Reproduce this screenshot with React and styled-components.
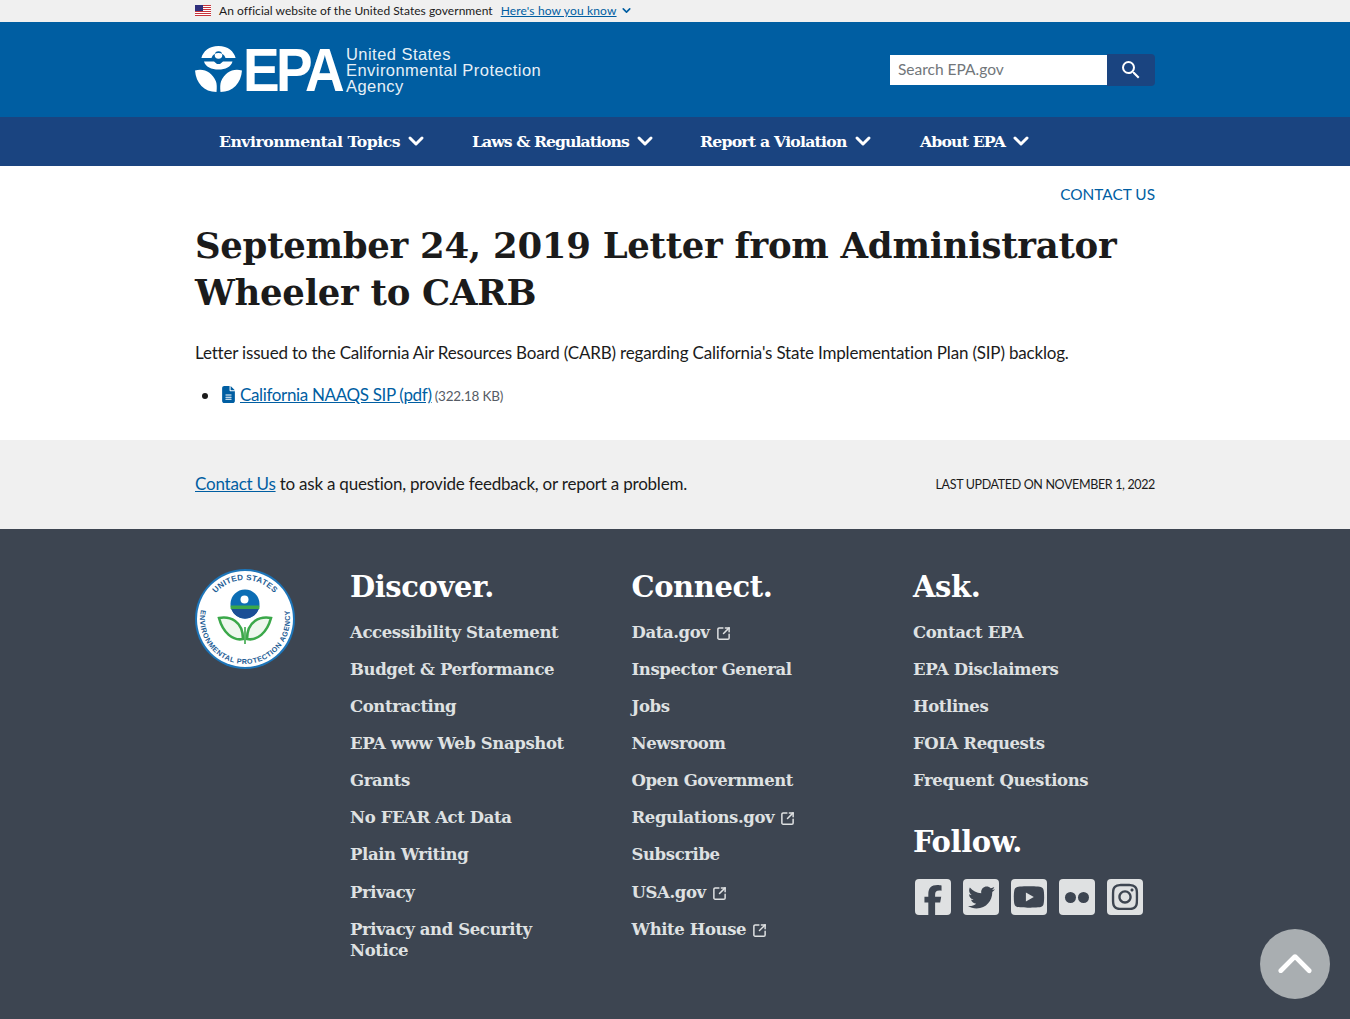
import React from "react";
import styled, { createGlobalStyle } from "styled-components";
import { MdSearch } from "react-icons/md";
import { FaFileLines, FaFacebookF, FaTwitter, FaYoutube, FaInstagram, FaChevronUp } from "react-icons/fa6";
import { SquareArrowOutUpRight, ChevronDown } from "lucide-react";

const SANS = `"Lato", "Open Sans", sans-serif`;
const SERIF = `"DejaVu Serif", "Liberation Serif", serif`;

const GlobalStyle = createGlobalStyle`
  html, body { margin: 0; padding: 0; }
  body { font-family: ${SANS}; color: #1b1b1b; background: #3d4551; }
  #root { min-height: 100vh; display: flex; flex-direction: column; }
  a { color: inherit; }
`;

const Wrap = styled.div`
  width: 960px;
  margin: 0 auto;
`;

const GovBanner = styled.div`
  height: 22px;
  background: #f0f0f0;
  font-size: 12px;
`;

const GovRow = styled(Wrap)`
  display: flex;
  align-items: center;
  height: 21px;
`;

const GovText = styled.span`
  margin-left: 8px;
  letter-spacing: 0.04px;
`;

const GovLink = styled.a`
  margin-left: 8px;
  color: #005ea2;
  text-decoration: underline;
  letter-spacing: 0.15px;
`;

const GovChevron = styled(ChevronDown)`
  margin-left: 3px;
  color: #005ea2;
`;

const Header = styled.header`
  height: 95px;
  background: #005ea2;
`;

const HeaderRow = styled(Wrap)`
  height: 95px;
  display: flex;
  align-items: center;
  justify-content: space-between;
`;

const Logo = styled.a`
  display: flex;
  align-items: center;
  color: #fff;
  text-decoration: none;
`;

const LogoMark = styled.span`
  flex: none;
  font-family: "Liberation Sans", sans-serif;
  font-weight: 700;
  font-size: 61px;
  line-height: 46px;
  letter-spacing: -4px;
  margin-left: 1px;
  transform: scaleX(0.9);
  transform-origin: left center;
  width: 103px;
`;

const LogoName = styled.span`
  font-family: "Liberation Sans", sans-serif;
  font-size: 16.5px;
  line-height: 16px;
  letter-spacing: 0.45px;
  color: #e6f0f7;
`;

const SearchForm = styled.form`
  display: flex;
  width: 265px;
  height: 32px;
`;

const SearchInput = styled.input`
  width: 217px;
  height: 30px;
  margin-top: 1px;
  box-sizing: border-box;
  border: 0;
  padding: 0 8px 2px;
  font: 400 15.5px ${SANS};
  background: #fff;
  border-radius: 0;
  &::placeholder { color: #71767a; opacity: 1; }
`;

const SearchButton = styled.button`
  flex: 1;
  border: 0;
  padding: 0;
  background: #1a4480;
  color: #fff;
  border-radius: 0 4px 4px 0;
  display: flex;
  align-items: center;
  justify-content: center;
`;

const Nav = styled.nav`
  height: 49px;
  background: #1a4480;
`;

const NavRow = styled(Wrap)`
  display: flex;
  height: 48px;
  align-items: center;
  padding-left: 24px;
  box-sizing: border-box;
`;

const NavItem = styled.a`
  display: flex;
  align-items: center;
  width: ${(p) => p.$w}px;
  color: #fff;
  font: 700 15.7px ${SERIF};
  letter-spacing: ${(p) => p.$track}px;
  svg { margin-left: 4px; }
`;

const Main = styled(Wrap)`
  background: #fff;
`;

const MainBand = styled.main`
  background: #fff;
  height: 274px;
`;

const TopContact = styled.div`
  padding-top: 17px;
  text-align: right;
  font-size: 15.4px;
  line-height: 22px;
  color: #005ea2;
`;

const Title = styled.h1`
  margin: 17px 0 0;
  font: 700 35.5px/47px ${SERIF};
  letter-spacing: -0.3px;
  color: #1b1b1b;
`;

const Lead = styled.p`
  margin: 25px 0 0;
  font-size: 17px;
  line-height: 24px;
  letter-spacing: -0.18px;
`;

const FileList = styled.ul`
  margin: 18px 0 0;
  padding-left: 25px;
  font-size: 17px;
  line-height: 24px;
`;

const FileLink = styled.a`
  color: #005ea2;
  text-decoration: underline;
  letter-spacing: -0.35px;
  svg { margin-right: 3px; vertical-align: -2px; }
`;

const FileSize = styled.span`
  margin-left: 3px;
  font-size: 13.5px;
  color: #565c65;
  letter-spacing: -0.2px;
`;

const Feedback = styled.div`
  background: #f0f0f0;
  height: 89px;
`;

const FeedbackRow = styled(Wrap)`
  height: 87px;
  display: flex;
  align-items: center;
  justify-content: space-between;
  font-size: 17px;
  letter-spacing: -0.22px;
`;

const FeedbackLink = styled.a`
  color: #005ea2;
  text-decoration: underline;
`;

const Updated = styled.span`
  padding-top: 1px;
  font-size: 12.5px;
  text-transform: uppercase;
  letter-spacing: -0.35px;
`;

const Footer = styled.footer`
  flex: 1;
  background: #3d4551;
  color: #fff;
`;

const FooterGrid = styled(Wrap)`
  display: grid;
  grid-template-columns: 115px repeat(3, 241.5px);
  column-gap: 40px;
  padding-top: 40px;
`;

const FooterTitle = styled.h2`
  margin: 0;
  font: 700 29px/36px ${SERIF};
  letter-spacing: -0.4px;
  color: #fff;
`;

const FooterLinks = styled.div`
  display: flex;
  flex-direction: column;
  gap: 16.09px;
  margin-top: 17px;
`;

const FooterLink = styled.a`
  display: block;
  font: 700 16.5px/21px ${SERIF};
  letter-spacing: -0.4px;
  color: #dfe1e2;
  svg { margin-left: 6px; vertical-align: -3px; }
`;

const FollowTitle = styled(FooterTitle)`
  margin-top: 33px;
`;

const Socials = styled.div`
  display: flex;
  gap: 12px;
  margin-top: 19px;
  padding-left: 2px;
`;

const SocialSquare = styled.a`
  width: 36px;
  height: 36px;
  border-radius: 4px;
  background: #dfe1e2;
  color: #3d4551;
  display: flex;
  align-items: center;
  justify-content: center;
  overflow: hidden;
`;

const FlickrDots = styled.span`
  display: flex;
  gap: 2px;
  i {
    width: 11px;
    height: 11px;
    border-radius: 50%;
    background: #3d4551;
  }
`;

const FacebookGlyph = styled(FaFacebookF)`
  margin-top: 6px;
`;

const BackToTop = styled.a`
  position: fixed;
  right: 20px;
  bottom: 20px;
  width: 70px;
  height: 70px;
  box-sizing: border-box;
  padding-top: 3px;
  border-radius: 50%;
  background: #a9aeb1;
  color: #fff;
  display: flex;
  align-items: center;
  justify-content: center;
`;

const Flag = () => (
  <svg width="16" height="11" viewBox="0 0 16 11" aria-hidden="true">
    <rect width="16" height="11" fill="#fff" />
    {[0, 2, 4, 6, 8, 10].map((y) => (
      <rect key={y} y={y} width="16" height="1" fill="#c8343c" />
    ))}
    <rect width="8" height="6" fill="#2e2f7c" />
  </svg>
);

const Flower = () => (
  <svg width="47" height="47" viewBox="0 0 47 47" aria-hidden="true">
    <path
      fill="#fff"
      fillRule="evenodd"
      d="M23.5 0C33 0 39 5.500 40.600 12H30.500c-1-3.200-3.800-5-7-5s-6 1.800-7 5H6.400C8 5.500 14 0 23.500 0ZM23.500 5.200a3.800 3.800 0 1 1 0 7.600 3.800 3.800 0 0 1 0-7.600ZM9.500 15.500h9.500l3 2.500h3l3-2.500h9.500c-1.500 5.500-7 8-14 8s-13-2.500-14.500-8Z"
    />
    <path fill="#fff" d="M0 24.500c9-2.500 17 1.500 21 11 .8 2.500 1 6 .5 10.500C9 46 1 37 0 24.500ZM47 24.500c-9-2.500-17 1.500-21 11-.8 2.500-1 6-.5 10.500C38 46 46 37 47 24.500Z" />
  </svg>
);

const Seal = () => (
  <svg width="100" height="100" viewBox="0 0 100 100" aria-hidden="true">
    <defs>
      <path id="sealTop" d="M11 50a39 39 0 0 1 78 0" />
      <path id="sealBottom" d="M9.200 31A45 45 0 1 0 90.800 31" />
    </defs>
    <circle cx="50" cy="50" r="50" fill="#1d75b9" />
    <circle cx="50" cy="50" r="48" fill="#fff" />
    <text fontFamily="Liberation Sans, sans-serif" fontWeight="700" fontSize="8" fill="#1d5c94" letterSpacing="0.3">
      <textPath href="#sealTop" startOffset="50%" textAnchor="middle">UNITED STATES</textPath>
    </text>
    <text fontFamily="Liberation Sans, sans-serif" fontWeight="700" fontSize="7.200" fill="#1d5c94" letterSpacing="0.500">
      <textPath href="#sealBottom" startOffset="50%" textAnchor="middle">ENVIRONMENTAL PROTECTION AGENCY</textPath>
    </text>
    <circle cx="50" cy="35" r="14.500" fill="#0c6db4" />
    <path d="M36.300 40h27.400A14.500 14.500 0 0 1 36.300 40Z" fill="#1b4f95" />
    <rect x="35.600" y="36.500" width="28.800" height="3.500" fill="#3ba84a" />
    <circle cx="49.500" cy="30.500" r="4" fill="#fff" />
    <path d="M50 58v17" stroke="#3ba84a" strokeWidth="1.600" />
    <path d="M48 70C38 72 28 64 24 49c11-2 24 3 24 21Z" fill="#eef7ee" stroke="#3ba84a" strokeWidth="2.600" />
    <path d="M52 70c10 2 20-6 24-21-11-2-24 3-24 21Z" fill="#eef7ee" stroke="#3ba84a" strokeWidth="2.600" />
  </svg>
);

const External = () => <SquareArrowOutUpRight size={15} strokeWidth={2.4} />;

const NAV = [
  ["Environmental Topics", 253, -0.5],
  ["Laws & Regulations", 228, -0.95],
  ["Report a Violation", 220, -0.78],
  ["About EPA", 130, -0.83],
];

const DISCOVER = [
  "Accessibility Statement",
  "Budget & Performance",
  "Contracting",
  "EPA www Web Snapshot",
  "Grants",
  "No FEAR Act Data",
  "Plain Writing",
  "Privacy",
  "Privacy and Security Notice",
];

const CONNECT = [
  ["Data.gov", true],
  ["Inspector General"],
  ["Jobs"],
  ["Newsroom"],
  ["Open Government"],
  ["Regulations.gov", true],
  ["Subscribe"],
  ["USA.gov", true],
  ["White House", true],
];

const ASK = ["Contact EPA", "EPA Disclaimers", "Hotlines", "FOIA Requests", "Frequent Questions"];

export default function App() {
  return (
    <>
      <GlobalStyle />
      <GovBanner>
        <GovRow>
          <Flag />
          <GovText>An official website of the United States government</GovText>
          <GovLink href="#">Here's how you know</GovLink>
          <GovChevron size={13} strokeWidth={3} />
        </GovRow>
      </GovBanner>

      <Header>
        <HeaderRow>
          <Logo href="#">
            <Flower />
            <LogoMark>EPA</LogoMark>
            <LogoName>
              United States
              <br />
              Environmental Protection
              <br />
              Agency
            </LogoName>
          </Logo>
          <SearchForm onSubmit={(e) => e.preventDefault()}>
            <SearchInput placeholder="Search EPA.gov" />
            <SearchButton type="submit" aria-label="Search">
              <MdSearch size={24} />
            </SearchButton>
          </SearchForm>
        </HeaderRow>
      </Header>

      <Nav>
        <NavRow>
          {NAV.map(([label, w, track]) => (
            <NavItem key={label} $w={w} $track={track}>
              {label}
              <ChevronDown size={24} strokeWidth={3} />
            </NavItem>
          ))}
        </NavRow>
      </Nav>

      <MainBand>
        <Main>
          <TopContact>CONTACT US</TopContact>
          <Title>September 24, 2019 Letter from Administrator Wheeler to CARB</Title>
          <Lead>
            Letter issued to the California Air Resources Board (CARB) regarding California's State Implementation Plan (SIP) backlog.
          </Lead>
          <FileList>
            <li>
              <FileLink href="#">
                <FaFileLines size={17} />
                California NAAQS SIP (pdf)
              </FileLink>
              <FileSize>(322.18 KB)</FileSize>
            </li>
          </FileList>
        </Main>
      </MainBand>

      <Feedback>
        <FeedbackRow>
          <span>
            <FeedbackLink href="#">Contact Us</FeedbackLink> to ask a question, provide feedback, or report a problem.
          </span>
          <Updated>Last updated on November 1, 2022</Updated>
        </FeedbackRow>
      </Feedback>

      <Footer>
        <FooterGrid>
          <Seal />
          <div>
            <FooterTitle>Discover.</FooterTitle>
            <FooterLinks>
              {DISCOVER.map((l) => (
                <FooterLink key={l}>{l}</FooterLink>
              ))}
            </FooterLinks>
          </div>
          <div>
            <FooterTitle>Connect.</FooterTitle>
            <FooterLinks>
              {CONNECT.map(([l, ext]) => (
                <FooterLink key={l}>
                  {l}
                  {ext && <External />}
                </FooterLink>
              ))}
            </FooterLinks>
          </div>
          <div>
            <FooterTitle>Ask.</FooterTitle>
            <FooterLinks>
              {ASK.map((l) => (
                <FooterLink key={l}>{l}</FooterLink>
              ))}
            </FooterLinks>
            <FollowTitle>Follow.</FollowTitle>
            <Socials>
              <SocialSquare aria-label="Facebook"><FacebookGlyph size={30} /></SocialSquare>
              <SocialSquare aria-label="Twitter"><FaTwitter size={27} /></SocialSquare>
              <SocialSquare aria-label="YouTube"><FaYoutube size={32} /></SocialSquare>
              <SocialSquare aria-label="Flickr"><FlickrDots><i /><i /></FlickrDots></SocialSquare>
              <SocialSquare aria-label="Instagram"><FaInstagram size={30} /></SocialSquare>
            </Socials>
          </div>
        </FooterGrid>
      </Footer>

      <BackToTop href="#" aria-label="Back to top">
        <FaChevronUp size={38} />
      </BackToTop>
    </>
  );
}
